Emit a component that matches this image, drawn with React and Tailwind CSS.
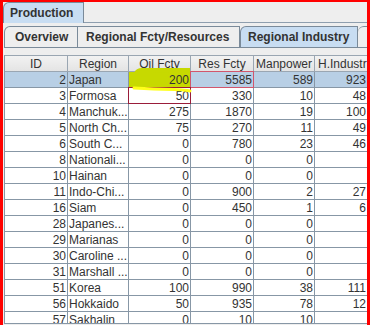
import React from "react";

const rows = [
  ["2", "Japan", "200", "5585", "589", "923"],
  ["3", "Formosa", "50", "330", "10", "48"],
  ["4", "Manchuk...", "275", "1870", "19", "100"],
  ["5", "North Ch...", "75", "270", "11", "49"],
  ["6", "South C...", "0", "780", "23", "46"],
  ["8", "Nationali...", "0", "0", "0", ""],
  ["10", "Hainan", "0", "0", "0", ""],
  ["11", "Indo-Chi...", "0", "900", "2", "27"],
  ["16", "Siam", "0", "450", "1", "6"],
  ["28", "Japanes...", "0", "0", "0", ""],
  ["29", "Marianas", "0", "0", "0", ""],
  ["30", "Caroline ...", "0", "0", "0", ""],
  ["31", "Marshall ...", "0", "0", "0", ""],
  ["51", "Korea", "100", "990", "38", "111"],
  ["56", "Hokkaido", "50", "935", "78", "12"],
  ["57", "Sakhalin", "0", "10", "10", ""],
];

const headers = ["ID", "Region", "Oil Fcty", "Res Fcty", "Manpower", "H.Industr"];

export default function App() {
  return (
    <div className="relative w-[370px] h-[325px] overflow-hidden bg-[#eeeeee] font-['Liberation_Sans',Arial,sans-serif] text-[12px] text-[#333333]">
      {/* top-level tabs */}
      <div className="flex items-end h-[23px] pt-[2px] pl-[3px]">
        <div className="h-[21px] w-[81px] shrink-0 bg-[#c8ddf2] border border-b-0 border-[#7a8a99] rounded-tl-[6px] flex items-center pl-[6px] font-bold text-[#333333] leading-none">
          Production
        </div>
        <div className="flex-1 h-full border-b border-[#8e9eae]" />
      </div>

      {/* content pane */}
      <div className="pl-[4px]">
        {/* second-level tabs */}
        <div className="flex items-end h-[24px] pt-[3px]">
          <div className="h-[21px] w-[74px] shrink-0 bg-[#eeeeee] border border-b-0 border-[#7a8a99] rounded-tl-[6px] flex items-center pl-[10px] font-bold leading-none">
            Overview
          </div>
          <div className="h-[21px] w-[162px] shrink-0 bg-[#eeeeee] border border-b-0 border-l-0 border-[#7a8a99] flex items-center pl-[8px] font-bold leading-none">
            Regional Fcty/Resources
          </div>
          <div className="h-[21px] w-[118px] shrink-0 bg-[#c8ddf2] border border-b-0 border-[#7a8a99] rounded-tl-[6px] flex items-center pl-[7px] font-bold leading-none">
            Regional Industry
          </div>
          <div className="h-[21px] w-[30px] shrink-0 bg-[#eeeeee] border border-b-0 border-l-0 border-[#7a8a99] rounded-tl-[6px]" />
        </div>
        <div className="h-[8px] border-t border-[#7a8a99]" />

        {/* table */}
        <div className="relative h-[269px] overflow-hidden border-b border-[#8797a6]">
          <div className="grid grid-cols-[63px_61px_62px_63px_61px_54px] border-l border-[#8797a6]">
            {headers.map((h, i) => (
              <div
                key={h}
                className={`h-[17px] border-t border-b border-r border-[#9aa6b2] bg-[linear-gradient(#f2f2f2,#e4e4e4)] flex items-center ${i === 5 ? "justify-start pl-[3px]" : "justify-center"} leading-none whitespace-nowrap overflow-hidden`}
              >
                {h}
              </div>
            ))}
            {rows.map((r, ri) =>
              r.map((c, ci) => {
                const sel = ri === 0;
                let bg = "bg-white";
                if (sel) bg = "bg-[#b8cfe5]";
                if (sel && ci === 2) bg = "bg-[#c7d900]";
                let align = ci === 1 ? "justify-start pl-[1px]" : "justify-end pr-[1px]";
                if (ci === 5) align = "justify-end pr-[2px]";
                return (
                  <div
                    key={ri + "-" + ci}
                    className={`h-[16px] border-b border-r border-[#8797a6] ${bg} flex items-center ${align} leading-none whitespace-nowrap overflow-hidden`}
                  >
                    {c}
                  </div>
                );
              })
            )}
          </div>

          {/* annotations */}
          <div className="absolute left-[186px] top-[16px] w-[64px] h-[17px] border border-[#d2566c] pointer-events-none" />
          <div className="absolute left-[124px] top-[32px] w-[63px] h-[17px] border border-[#9a1d3a] pointer-events-none" />
          <svg className="absolute left-[120px] top-[8px] pointer-events-none" width="75" height="32" viewBox="0 0 75 32">
            <path d="M10 10 Q12 5 18 5 L66 5 L66 9 Z" fill="#c7d900" />
            <path d="M10 25 Q30 26 50 26.5 Q62 27 66 28" stroke="#ffff1a" strokeWidth="3" fill="none" strokeLinecap="round" />
          </svg>
        </div>
      </div>

      {/* red annotation frame */}
      <div className="absolute inset-0 border-l-[3px] border-t-2 border-r-[3px] border-[#ff0000] pointer-events-none" />
    </div>
  );
}
